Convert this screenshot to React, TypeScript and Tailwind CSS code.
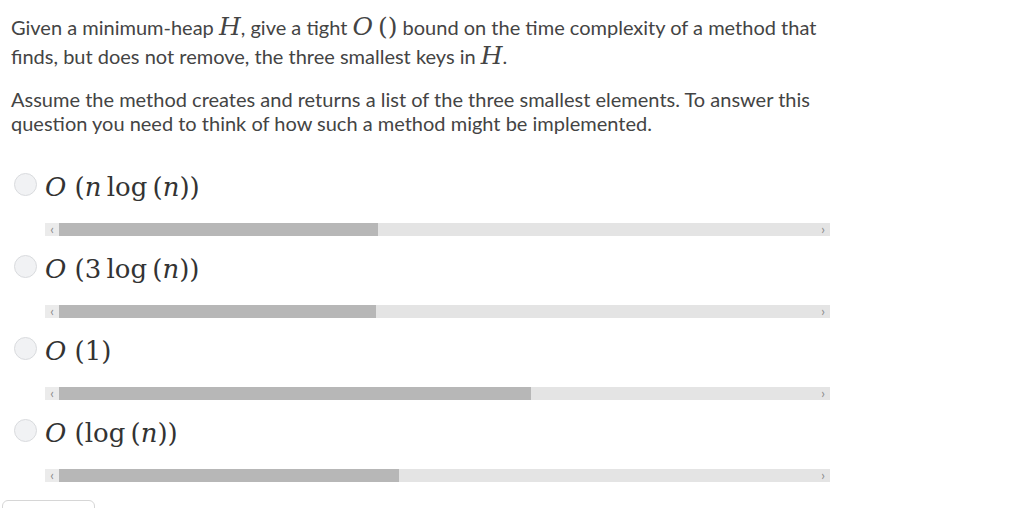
import React from 'react';

const OPTIONS = [
  { key: 'a', thumb: 319, body: <><i>n</i>&thinsp;log&thinsp;(<i>n</i>))</> },
  { key: 'b', thumb: 317, body: <>3&thinsp;log&thinsp;(<i>n</i>))</> },
  { key: 'c', thumb: 472, body: <>1)</> },
  { key: 'd', thumb: 340, body: <>log&thinsp;(<i>n</i>))</> },
];

function M({ children }: { children: React.ReactNode }) {
  return <span className="font-['DejaVu_Serif',serif] text-[25px] leading-none">{children}</span>;
}

function ScrollBar({ thumb }: { thumb: number }) {
  return (
    <div className="ml-[45px] w-[785px] h-[13px] flex bg-[#e4e4e4]">
      <div className="w-[14px] h-full bg-[#ebebeb] flex items-center justify-center text-[#888] text-[13px] leading-none">&lsaquo;</div>
      <div className="h-full bg-[#b7b7b7]" style={{ width: thumb }} />
      <div className="flex-1" />
      <div className="w-[14px] h-full flex items-center justify-center text-[#888] text-[13px] leading-none">&rsaquo;</div>
    </div>
  );
}

export default function App() {
  return (
    <div className="w-[1024px] h-[508px] overflow-hidden bg-white font-['Lato','Noto_Sans',sans-serif] text-[20px] text-[#444]">
      <div className="pl-[11px] pt-[13px]">
        <p className="leading-[29px] w-[840px]">
          Given a minimum-heap <M><i>H</i></M>, give a tight <M><i>O</i>&thinsp;()</M> bound on the time complexity of a method that finds, but does not remove, the three smallest keys in <M><i>H</i></M>.
        </p>
        <p className="mt-[16px] leading-[24px] w-[830px]">
          Assume the method creates and returns a list of the three smallest elements. To answer this question you need to think of how such a method might be implemented.
        </p>
      </div>

      <div className="mt-[37px]">
        {OPTIONS.map(o => (
          <div key={o.key} className="mb-[18px]">
            <div className="h-[40px] flex items-start gap-[8px] pl-[14px]">
              <span className="mt-[1px] w-[23px] h-[23px] rounded-full bg-[#f1f2f4] border border-[#d9dbde] shrink-0" />
              <span className="font-['DejaVu_Serif',serif] text-[26px] leading-[30px] text-[#333]">
                <i>O</i>&nbsp;({o.body}
              </span>
            </div>
            <div className="mt-[11px]"><ScrollBar thumb={o.thumb} /></div>
          </div>
        ))}
      </div>

      <div className="mt-[9px] ml-[2px] w-[93px] h-[20px] rounded-t-md border border-[#d6d6d6]" />
    </div>
  );
}
